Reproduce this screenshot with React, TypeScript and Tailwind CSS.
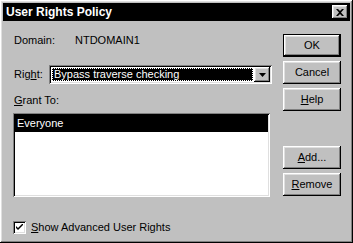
const raised =
  'shadow-[inset_-1px_-1px_#000,inset_1px_1px_#fff,inset_-2px_-2px_#808080,inset_2px_2px_#dfdfdf]'
const sunken =
  'shadow-[inset_1px_1px_#808080,inset_-1px_-1px_#fff,inset_2px_2px_#000,inset_-2px_-2px_#dfdfdf]'

function Btn({ children, isDefault }: { children: React.ReactNode; isDefault?: boolean }) {
  if (isDefault) {
    return (
      <div className="h-[23px] w-[58px] border border-black">
        <div className={`h-full w-full flex items-center justify-center ${raised}`}>{children}</div>
      </div>
    )
  }
  return (
    <div className={`h-[23px] w-[58px] flex items-center justify-center ${raised}`}>{children}</div>
  )
}

export default function App() {
  return (
    <div
      className={`w-[353px] h-[243px] bg-[#c0c0c0] p-[3px] text-[11px] text-black ${raised}`}
      style={{ fontFamily: '"Liberation Sans", Arial, sans-serif' }}
    >
      <div className="h-[18px] bg-black flex items-center justify-between pl-[3px] pr-[2px]">
        <span className="text-white font-bold text-[12px]">User Rights Policy</span>
        <div className={`w-[16px] h-[14px] bg-[#c0c0c0] flex items-center justify-center ${raised}`}>
          <svg width="8" height="7" viewBox="0 0 8 7">
            <path d="M0 0h2l2 2 2-2h2L5 3.5 8 7H6L4 5 2 7H0l3-3.5z" fill="#000" />
          </svg>
        </div>
      </div>

      <div className="flex pl-[10px]">
        <div className="w-[260px] flex flex-col">
          <div className="flex mt-[13px] h-[13px] items-center">
            <span className="w-[62px] pl-[1px]">Domain:</span>
            <span>NTDOMAIN1</span>
          </div>

          <div className="flex items-center mt-[18px]">
            <span className="w-[36px] pl-[1px]">
              Rig<u>h</u>t:
            </span>
            <div className={`w-[223px] h-[19px] bg-white flex items-center p-[2px] ${sunken}`}>
              <div className="flex-1 h-full p-[1px] bg-white">
                <div className="h-full bg-black text-white flex items-center pl-[2px] outline outline-1 outline-dotted outline-white -outline-offset-1">
                  Bypass traverse checking
                </div>
              </div>
              <div className={`w-[16px] h-[15px] bg-[#c0c0c0] flex items-center justify-center ${raised}`}>
                <svg width="7" height="4" viewBox="0 0 7 4">
                  <path d="M0 0h7L3.5 4z" fill="#000" />
                </svg>
              </div>
            </div>
          </div>

          <div className="mt-[10px] h-[13px] flex items-center pl-[1px]">
            <span>
              <u>G</u>rant To:
            </span>
          </div>

          <div className={`mt-[6px] w-[257px] h-[84px] bg-white p-[2px] ${sunken}`}>
            <div className="h-[17px] bg-black text-white flex items-center pl-[2px]">Everyone</div>
          </div>

          <div className="mt-[22px] flex items-center">
            <div className={`w-[13px] h-[13px] bg-white flex items-center justify-center ${sunken}`}>
              <svg width="7" height="7" viewBox="0 0 7 7">
                <path d="M0 2l2 2 5-5v2L2 6 0 4z" fill="#000" />
              </svg>
            </div>
            <span className="ml-[5px]">
              <u>S</u>how Advanced User Rights
            </span>
          </div>
        </div>

        <div className="ml-[10px] flex flex-col mt-[13px] gap-[4px]">
          <Btn isDefault>OK</Btn>
          <Btn>Cancel</Btn>
          <Btn>
            <span>
              <u>H</u>elp
            </span>
          </Btn>
          <div className="h-[27px]" />
          <Btn>
            <span>
              <u>A</u>dd...
            </span>
          </Btn>
          <Btn>
            <span>
              <u>R</u>emove
            </span>
          </Btn>
        </div>
      </div>
    </div>
  )
}
